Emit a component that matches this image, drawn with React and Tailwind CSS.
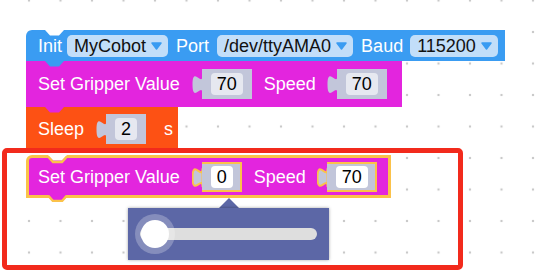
import React from 'react'

// small trapezoid tab under a block (next-statement connection)
function Tab({ fill, stroke }) {
    return (
        <svg className="absolute left-[19px] top-full z-10" width="19" height="7" viewBox="0 0 19 7">
            <path d="M0 0 L5 5.5 L14 5.5 L19 0 Z" fill={fill} />
            {stroke && <path d="M0 0.5 L5 6 L14 6 L19 0.5" fill="none" stroke={stroke} strokeWidth="2.5" />}
        </svg>
    )
}

// dip on the top edge (previous-statement connection)
function Dip({ stroke }) {
    return (
        <svg className={`absolute left-[19px] ${stroke ? 'top-[-3px]' : 'top-0'}`} width="19" height="9" viewBox="0 0 19 9">
            <path d="M0 0 L5 5.5 L14 5.5 L19 0 Z" fill="#ffffff" />
            {stroke && <path d="M0 1.5 L5 7 L14 7 L19 1.5" fill="none" stroke={stroke} strokeWidth="2.5" />}
        </svg>
    )
}

function Arrow() {
    return (
        <svg className="ml-[5px]" width="11" height="8" viewBox="0 0 11 8">
            <path d="M1 1 H10 L5.5 7 Z" fill="#3a9cf2" stroke="#3a9cf2" strokeLinejoin="round" strokeWidth="1.5" />
        </svg>
    )
}

function Dropdown({ children, className }) {
    return (
        <span className={`flex h-[22px] items-center rounded-[5px] bg-[#c2def9] pl-[7px] pr-[6px] text-[#111] ${className}`}>
            {children}
            <Arrow />
        </span>
    )
}

// grey shadow block with its puzzle tab and the white field
function Input({ value, className, hl }) {
    return (
        <span className={`flex items-start ${className}`}>
            <svg className="mt-[6px]" width="10" height="20" viewBox="0 0 10 20">
                <path d="M10.5 19 c 0,-12.5 -10,10 -10,-9.4 s 10,3.1 10,-9.4 Z" fill="#c2c6da" stroke={hl ? '#fbc24a' : 'none'} strokeWidth="2" />
            </svg>
            <span className={`flex h-[30px] items-center bg-[#c2c6da] ${hl ? 'border-[2.5px] border-l-0 border-[#fbc24a] pl-[9px] pr-[7px]' : 'px-[9px]'}`}>
                <span className={`flex h-[22px] min-w-[17px] items-center justify-center rounded-[4px] px-[6px] text-black ${hl ? 'bg-white' : 'bg-[#e6e8f0]'}`}>
                    {value}
                </span>
            </span>
        </span>
    )
}

export default function App() {
    return (
        <div className="relative h-[279px] w-[539px] overflow-hidden bg-white bg-[radial-gradient(circle,#c9c9c9_1px,transparent_1.6px)] bg-[length:31.5px_31.5px] bg-[position:13.25px_16.25px] font-['Liberation_Sans',Arial,sans-serif] text-[18px] leading-none text-white">

            {/* block stack */}
            <div className="flex flex-col items-start pl-[26px] pt-[30px]">

                {/* Init */}
                <div className="relative flex h-[31px] w-[479px] items-center rounded-tl-[6px] bg-[#3a9cf2] pl-[12px]">
                    <Dip />
                    <span>Init</span>
                    <Dropdown className="ml-[5px]">MyCobot</Dropdown>
                    <span className="ml-[8px]">Port</span>
                    <Dropdown className="ml-[8px]">/dev/ttyAMA0</Dropdown>
                    <span className="ml-[8px]">Baud</span>
                    <Dropdown className="ml-[7px]">115200</Dropdown>
                    <Tab fill="#3a9cf2" />
                </div>

                {/* Set Gripper Value */}
                <div className="relative flex h-[46px] w-[376px] items-center bg-[#e325de] pl-[12px]">
                    <span>Set Gripper Value</span>
                    <Input value="70" className="ml-[12px]" />
                    <span className="ml-[12px]">Speed</span>
                    <Input value="70" className="ml-[11px]" />
                    <Tab fill="#e325de" />
                </div>

                {/* Sleep */}
                <div className="relative flex h-[43px] w-[152px] items-center bg-[#fd5114] pl-[12px]">
                    <span>Sleep</span>
                    <Input value="2" className="ml-[12px]" />
                    <span className="ml-[18px]">s</span>
                </div>

                {/* selected block */}
                <div className="relative mt-[5px] flex h-[43px] w-[365px] items-center rounded-tl-[6px] border-[3px] border-[#fbc24a] bg-[#e325de] pl-[9px]">
                    <Dip stroke="#fbc24a" />
                    <span>Set Gripper Value</span>
                    <Input value="0" className="ml-[12px]" hl />
                    <span className="ml-[12px]">Speed</span>
                    <Input value="70" className="ml-[11px]" hl />
                    <Tab fill="#e325de" stroke="#fbc24a" />
                </div>
            </div>

            {/* slider dropdown */}
            <svg className="absolute left-[218px] top-[198px]" width="22" height="11" viewBox="0 0 22 11">
                <path d="M0 11 L11 0 L22 11 Z" fill="#5c67a6" />
            </svg>
            <div className="absolute left-[128px] top-[208px] flex h-[52px] w-[201px] items-center bg-[#5c67a6] px-[12px] shadow-[0_0_3px_rgba(0,0,0,0.35)]">
                <div className="relative h-[12px] flex-1 rounded-full bg-[#dedede]">
                    <div className="absolute left-[-5px] top-[-14px] flex h-[40px] w-[40px] items-center justify-center rounded-full bg-white/25">
                        <div className="h-[28px] w-[28px] rounded-full bg-white" />
                    </div>
                </div>
            </div>

            {/* annotation */}
            <div className="absolute left-[2px] top-[148px] h-[122px] w-[461px] rounded-[5px] border-[5px] border-[#f22a1c]" />
        </div>
    )
}
